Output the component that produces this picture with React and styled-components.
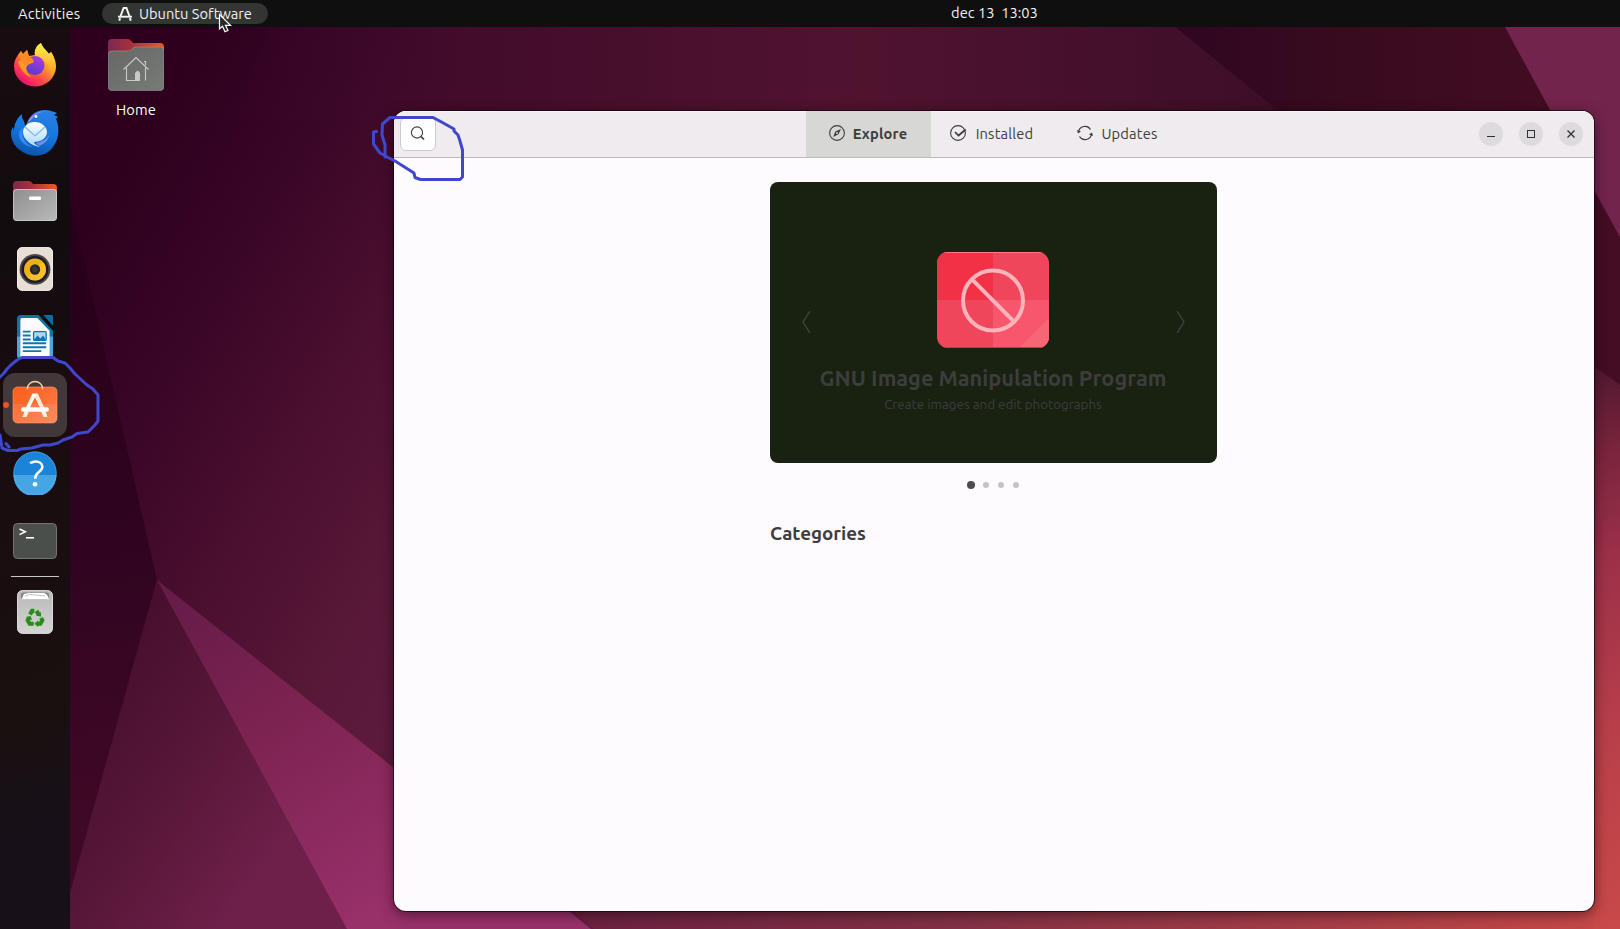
import React from "react";
import styled, { createGlobalStyle } from "styled-components";

const GlobalStyle = createGlobalStyle`
  * { box-sizing: border-box; }
  html, body, #root { height: 100%; }
  body {
    margin: 0;
    overflow: hidden;
    font-family: Ubuntu, "Noto Sans", "Open Sans", sans-serif;
    font-size: 14.67px;
  }
  button { font: inherit; color: inherit; border: 0; padding: 0; background: none; }
  svg { display: block; flex: none; }
`;

const Screen = styled.div`
  position: relative;
  width: 1620px;
  height: 929px;
  overflow: hidden;
  display: flex;
  flex-direction: column;
  background: #2e001f;
`;

const Backdrop = styled.svg`
  position: absolute;
  inset: 0;
`;

const TopBar = styled.header`
  position: relative;
  height: 27px;
  flex: none;
  display: grid;
  grid-template-columns: 1fr auto 1fr;
  align-items: center;
  background: #0f0f0f;
  color: #f2f2f2;
`;

const TopLeft = styled.div`
  display: flex;
  align-items: center;
  gap: 22px;
  padding-left: 18px;
`;

const TopLabel = styled.span`
  font-size: 14.67px;
  line-height: 20px;
  white-space: pre;
  letter-spacing: ${(p) => p.$spacing || 0}px;
`;

const Activities = styled(TopLabel)`
  width: 62px;
`;

const AppPill = styled.div`
  display: flex;
  align-items: center;
  gap: 7px;
  width: 166px;
  height: 21px;
  padding-left: 16px;
  border-radius: 11px;
  background: #333533;
`;

const Clock = styled(TopLabel)`
  margin-left: 369px;
  margin-bottom: 2px;
`;

const Desktop = styled.div`
  position: relative;
  flex: 1;
  display: flex;
`;

const Dock = styled.nav`
  width: 70px;
  padding: 6px 3px;
  display: flex;
  flex-direction: column;
  gap: 4px;
  background: linear-gradient(165deg, #190c10 0%, #120c0f 22%, #1a0c10 45%, #19100f 75%, #171018 88%, #171019 100%);
`;

const DockItem = styled.div`
  position: relative;
  height: 64px;
  flex: none;
  display: flex;
  align-items: center;
  justify-content: center;
  padding-bottom: ${(p) => p.$lift || 0}px;
  border-radius: 12px;
  background: ${(p) => (p.$active ? "#42383a" : "transparent")};
`;

const RunningDot = styled.i`
  position: absolute;
  left: 0;
  top: 29px;
  width: 6px;
  height: 6px;
  border-radius: 50%;
  background: #e95420;
`;

const DockSeparator = styled.hr`
  width: 48px;
  height: 1px;
  margin: -1px auto -1px;
  border: 0;
  flex: none;
  background: #c9c5c7;
`;

const DesktopIcon = styled.div`
  width: 132px;
  height: 100px;
  padding-top: 12px;
  display: flex;
  flex-direction: column;
  align-items: center;
  gap: 9px;
  color: #fff;
  text-shadow: 0 1px 2px rgba(0, 0, 0, 0.7);
  letter-spacing: 0.1px;
  line-height: 20px;
`;

const AppWindow = styled.main`
  width: 1200px;
  height: 800px;
  margin: 84px 0 0 192px;
  display: flex;
  flex-direction: column;
  border-radius: 12px;
  overflow: hidden;
  background: #fefbff;
  color: #3d3d3d;
  box-shadow: 0 0 0 1px rgba(20, 0, 12, 0.65), 0 3px 14px rgba(15, 0, 8, 0.55);
`;

const HeaderBar = styled.div`
  height: 47px;
  flex: none;
  display: grid;
  grid-template-columns: 1fr auto 1fr;
  background: #efebee;
  border-bottom: 1px solid #bdb9bc;
  box-shadow: inset 0 1px #fbf8fa;
`;

const SearchButton = styled.button`
  width: 36px;
  height: 34px;
  margin: 6px;
  display: grid;
  place-items: center;
  border: 1px solid #cdc9cc;
  border-radius: 6px;
  background: #fff;
`;

const Tabs = styled.div`
  display: flex;
  margin-right: 1px;
`;

const Tab = styled.button`
  width: 125px;
  height: 46px;
  display: flex;
  align-items: center;
  justify-content: center;
  gap: ${(p) => p.$gap || 8}px;
  padding-right: ${(p) => p.$shift || 0}px;
  padding-bottom: 2px;
  background: ${(p) => (p.$selected ? "#d7d7d6" : "transparent")};
  font-weight: ${(p) => (p.$selected ? 700 : 400)};
  letter-spacing: 0.18px;
  color: #3d3d3d;
`;

const WindowControls = styled.div`
  display: flex;
  align-items: center;
  justify-content: flex-end;
  gap: 16px;
  padding-right: 11px;
`;

const ControlButton = styled.button`
  width: 24px;
  height: 24px;
  border-radius: 50%;
  display: grid;
  place-items: center;
  background: #dddbdd;
`;

const Page = styled.section`
  width: 447px;
  margin: 24px auto 0 376px;
  display: flex;
  flex-direction: column;
`;

const Hero = styled.div`
  height: 281px;
  display: flex;
  align-items: center;
  justify-content: space-between;
  padding: 0 32px 2px;
  border-radius: 8px;
  background: #192111;
`;

const HeroContent = styled.div`
  align-self: flex-start;
  flex: 1;
  padding: 70px 1px 0 0;
  display: flex;
  flex-direction: column;
  align-items: center;
  white-space: nowrap;
`;

const HeroTitle = styled.h1`
  margin: 14px 0 0;
  font-size: 21.7px;
  line-height: 32px;
`;

const HeroSubtitle = styled.p`
  margin: 1px 0 0;
  font-size: 13.35px;
  line-height: 20px;
`;

const Pager = styled.div`
  display: flex;
  align-items: center;
  justify-content: center;
  height: 8px;
  margin-top: 18px;
  padding-right: 1px;
  gap: 9px;
`;

const PageDot = styled.i`
  width: ${(p) => (p.$current ? 8 : 6)}px;
  height: ${(p) => (p.$current ? 8 : 6)}px;
  margin-right: ${(p) => (p.$current ? -1 : 0)}px;
  border-radius: 50%;
  background: ${(p) => (p.$current ? "#4d4b4d" : "#c5c2c5")};
`;

const SectionTitle = styled.h2`
  margin: 31px 0 0;
  font-size: 18.8px;
  line-height: 26px;
`;

const Overlay = styled.svg`
  position: absolute;
  inset: 0;
  pointer-events: none;
`;

function Wallpaper() {
  return (
    <Backdrop width="1620" height="929" viewBox="0 0 1620 929">
      <defs>
        <linearGradient id="base" gradientUnits="userSpaceOnUse" x1="100" y1="200" x2="640" y2="520">
          <stop offset="0" stopColor="#2f001e" />
          <stop offset=".2" stopColor="#370526" />
          <stop offset=".45" stopColor="#4a0e2e" />
          <stop offset=".7" stopColor="#591838" />
          <stop offset="1" stopColor="#621c42" />
        </linearGradient>
        <linearGradient id="topBand" gradientUnits="userSpaceOnUse" x1="200" y1="0" x2="1280" y2="0">
          <stop offset="0" stopColor="#36042a" stopOpacity="0" />
          <stop offset=".25" stopColor="#420c2a" />
          <stop offset=".6" stopColor="#50132f" />
          <stop offset="1" stopColor="#3d0e28" />
        </linearGradient>
        <linearGradient id="topDark" x1="0" x2="1" y1="0" y2="0">
          <stop offset="0" stopColor="#2f0620" />
          <stop offset=".4" stopColor="#390b1f" />
          <stop offset="1" stopColor="#450d24" />
        </linearGradient>
        <linearGradient id="shade" gradientUnits="userSpaceOnUse" x1="70" y1="300" x2="150" y2="800">
          <stop offset="0" stopColor="#29001a" />
          <stop offset=".5" stopColor="#300420" />
          <stop offset="1" stopColor="#3f0825" />
        </linearGradient>
        <linearGradient id="lower" gradientUnits="userSpaceOnUse" x1="100" y1="680" x2="300" y2="820">
          <stop offset="0" stopColor="#480f2d" />
          <stop offset=".5" stopColor="#581738" />
          <stop offset="1" stopColor="#6e204a" />
        </linearGradient>
        <linearGradient id="pink" gradientUnits="userSpaceOnUse" x1="160" y1="590" x2="370" y2="910">
          <stop offset="0" stopColor="#651b48" />
          <stop offset=".45" stopColor="#7c2351" />
          <stop offset="1" stopColor="#98306a" />
        </linearGradient>
        <linearGradient id="right" x1="0" x2="0" y1="0" y2="1">
          <stop offset="0" stopColor="#4b172d" />
          <stop offset=".16" stopColor="#79243d" />
          <stop offset=".35" stopColor="#9c3049" />
          <stop offset=".65" stopColor="#b83f4a" />
          <stop offset="1" stopColor="#c94949" />
        </linearGradient>
        <linearGradient id="bottom" x1="0" x2="1" y1="0" y2="0">
          <stop offset="0" stopColor="#6b2140" />
          <stop offset=".35" stopColor="#803045" />
          <stop offset=".7" stopColor="#a33c47" />
          <stop offset="1" stopColor="#c64848" />
        </linearGradient>
      </defs>
      <rect width="1620" height="929" fill="url(#base)" />
      <path d="M270 27H1175L1290 120H230Z" fill="url(#topBand)" />
      <path d="M1175 27H1620V400H1594L1277 110Z" fill="url(#topDark)" />
      <path d="M1505 27H1620V237L1594 190L1550 110Z" fill="#73244c" />
      <path d="M70 200L157 580L60 929H0V200Z" fill="url(#shade)" />
      <path d="M157 580L347 929H60Z" fill="url(#lower)" />
      <path d="M157 580L394 768L591 929H347Z" fill="url(#pink)" />
      <path d="M1580 356L1620 385V929H1580Z" fill="url(#right)" />
      <path d="M565 905H1594V929H594Z" fill="url(#bottom)" />
    </Backdrop>
  );
}

const Firefox = () => (
  <svg width="44" height="44" viewBox="0 0 44 44">
    <defs>
      <linearGradient id="ff1" x1=".85" y1=".1" x2=".2" y2="1">
        <stop offset="0" stopColor="#fff44f" />
        <stop offset=".35" stopColor="#ffa02c" />
        <stop offset=".65" stopColor="#ff4f45" />
        <stop offset="1" stopColor="#e6007a" />
      </linearGradient>
      <linearGradient id="ff2" x1=".8" y1="0" x2=".3" y2="1">
        <stop offset="0" stopColor="#b238e8" />
        <stop offset="1" stopColor="#4f3fc8" />
      </linearGradient>
      <linearGradient id="ff3" x1="0" y1="0" x2="0" y2="1">
        <stop offset="0" stopColor="#fff14a" />
        <stop offset="1" stopColor="#ff9a22" />
      </linearGradient>
    </defs>
    <path d="M5 12L8 8L10 11L14 7L16 13L22 12C21 7 24 2 28 0C29 4 33 7 36 11L38 9C42 15 43 20 43 24A21 20 0 0 1 1 23C1 18 3 15 5 12Z" fill="url(#ff1)" />
    <path d="M28 0C29 4 33 7 36 11L38 9C43 17 44 27 38 33C39 26 35 19 28 15L22 12C21 7 24 2 28 0Z" fill="url(#ff3)" />
    <circle cx="22" cy="22.500" r="9.500" fill="url(#ff2)" />
    <path d="M5 19C8 16 14 16 21 18C20 21 16 20 14 23C12 26 14 31 19 34C13 34 8 27 5 19Z" fill="#ff9a22" />
    <path d="M5 12L8 8L10 11L14 7L16 14C20 15 21 17 20 19C17 20 15 20 13 23Z" fill="#ff8a20" />
  </svg>
);

const Thunderbird = () => (
  <svg width="48" height="46" viewBox="0 0 48 46">
    <defs>
      <linearGradient id="tb1" x1=".7" y1="0" x2=".4" y2="1">
        <stop offset="0" stopColor="#2b7fe4" />
        <stop offset=".5" stopColor="#1377df" />
        <stop offset="1" stopColor="#0b54ac" />
      </linearGradient>
      <linearGradient id="tb2" x1="0" y1="0" x2="0" y2="1">
        <stop offset="0" stopColor="#fff" />
        <stop offset="1" stopColor="#a9d7fb" />
      </linearGradient>
    </defs>
    <path d="M16 13C20 3 27 0 34 0C39 0 43 2 46 3L43 5L47 7L45 9C49 18 48 29 42 37C36 45 27 47 19 45C8 42 0 34 0 23C0 21 1 18 2 17L3 21C3 14 6 8 11 4C10 9 14 10 14 16Z" fill="url(#tb1)" />
    <path d="M16 13C20 4 27 1 37 1C29 1.500 25 4 22 8C20 10 18 12 16 13Z" fill="#9c85ef" />
    <circle cx="25" cy="6.500" r="1.400" fill="#fff" />
    <path d="M12 18C10 27 14 34 22 37C15 37 8 31 8 25C8 22 9 20 12 18Z" fill="#338df0" />
    <path d="M28 36C34 34 38 29 38 24C37 28 34 31 25 33Z" fill="#718dec" />
    <path d="M23.500 12C31 12 36 17 36 22C36 28 30 32 23 32C23 34 26 35 29 37C20 36 12 29 12 22C12 17 17 12 23.500 12Z" fill="url(#tb2)" />
    <path d="M14 17L23 25Q24 26 25 25L34 17" fill="none" stroke="#83bcf0" strokeWidth="1.400" />
  </svg>
);

const FolderBack = ({ id, d }) => (
  <>
    <defs>
      <linearGradient id={id} x1="0" x2="1">
        <stop offset="0" stopColor="#7c2850" />
        <stop offset=".4" stopColor="#a5313d" />
        <stop offset="1" stopColor="#f05a22" />
      </linearGradient>
    </defs>
    <path d={d} fill={`url(#${id})`} />
  </>
);

const Files = () => (
  <svg width="44" height="40" viewBox="0 0 44 40">
    <defs>
      <linearGradient id="fi" x1="0" y1="0" x2="1" y2="1">
        <stop offset="0" stopColor="#8f8f8f" />
        <stop offset="1" stopColor="#b9b9b9" />
      </linearGradient>
    </defs>
    <FolderBack id="fib" d="M0 4Q0 0 4 0H16Q18 0 20 3H40Q44 3 44 7V20H0Z" />
    <rect y="8" width="44" height="32" rx="4" fill="#d0d0d0" />
    <rect x=".7" y="8.700" width="42.600" height="30.600" rx="3.500" fill="url(#fi)" />
    <rect x="16" y="15.500" width="12" height="3.500" rx="1.200" fill="#fff" />
  </svg>
);

const Rhythmbox = () => (
  <svg width="36" height="44" viewBox="0 0 37 45">
    <rect x=".5" y=".5" width="36" height="44" rx="4.500" fill="#e8ded3" stroke="#f7f3ee" />
    <circle cx="18.500" cy="23" r="15.800" fill="#474847" />
    <circle cx="18.500" cy="23" r="13.800" fill="#1b1b2c" />
    <circle cx="18.500" cy="23" r="11.300" fill="#edb20f" />
    <path d="M10.500 31A11.300 11.300 0 0 0 26.500 15Z" fill="#ffc83b" opacity=".6" />
    <circle cx="18.500" cy="23" r="5.300" fill="#262827" />
    <circle cx="18.500" cy="23" r="2.800" fill="#383a39" />
  </svg>
);

const Writer = () => (
  <svg width="36" height="44" viewBox="0 0 37 45">
    <path d="M4 0H22L37 16V42Q37 45 33 45H4Q0 45 0 41V4Q0 0 4 0Z" fill="#0b75a8" />
    <path d="M0 22H37V42Q37 45 33 45H4Q0 45 0 41Z" fill="#4ba6d0" />
    <path d="M5 3H21L33.500 16V43H3.500V5Q3.500 3 5 3Z" fill="#fcfcfc" />
    <path d="M27 0H36Q37 0 37 1V11Z" fill="#0a6e9e" />
    <path d="M6 17H14M6 21H14M6 25H14M6 29H30M6 33H30M6 37H25" stroke="#0d76b2" strokeWidth="2" />
    <rect x="17" y="17" width="13" height="9" rx="1" fill="#a8d9f2" stroke="#0d76b2" strokeWidth="1.300" />
    <path d="M17 26L21 21L24 24L27 21L30 26Z" fill="#0d76b2" />
  </svg>
);

const StoreMark = ({ color }) => (
  <svg width="14" height="14" viewBox="0 0 14 14" fill="none" stroke={color}>
    <path d="M2.600 9L5.600 1H8.400L11.400 9M2 11L1.300 13.800M12 11L12.700 13.800" strokeWidth="2" />
    <path d="M0 9.700H14" strokeWidth="1.900" />
  </svg>
);

const Software = () => (
  <svg width="46" height="46" viewBox="0 0 46 46">
    <defs>
      <linearGradient id="sw" x1="0" y1="0" x2="1" y2="1">
        <stop offset="0" stopColor="#ff5b16" />
        <stop offset="1" stopColor="#f98254" />
      </linearGradient>
    </defs>
    <rect x="1" y="7" width="44" height="36" rx="4.500" fill="url(#sw)" stroke="#ff9b70" strokeWidth=".6" />
    <path d="M1 24H45V39Q45 43 41 43H5Q1 43 1 39Z" fill="#fff" opacity=".07" />
    <path d="M15.500 9.500V8.500C15.500 4.500 19 1.500 23 1.500S30.500 4.500 30.500 8.500V9.500" fill="none" stroke="#f4d3a0" strokeWidth="1.400" />
    <path d="M20.500 13.500H25.500L32.500 28.500H28.500L23 17L17.500 28.500H13.500Z" fill="#fff" />
    <path d="M23 17L25.500 13.500L32.500 28.500H28.500Z" fill="#ffe6d8" />
    <path d="M12.500 31.500H17L14.500 37H10.500ZM29 31.500H33.500L35.500 37H31.500Z" fill="#ffeee6" />
    <rect x="9" y="27.300" width="28" height="4.500" rx="2.200" fill="#fff" />
  </svg>
);

const Help = () => (
  <svg width="44" height="44" viewBox="0 0 45 45">
    <circle cx="22.500" cy="22.500" r="22" fill="#1c84d8" />
    <path d="M.5 24.500H44.500A22 22 0 0 1 .5 24.500Z" fill="#46a5e5" />
    <circle cx="22.500" cy="22.500" r="21.700" fill="none" stroke="#5cb2ea" strokeWidth=".6" />
    <path d="M17.500 12.500Q20 10.700 23 10.700C27 10.700 30 12.800 30 16.200C30 21.500 22.800 21.500 22.800 27.300V28.500" fill="none" stroke="#fff" strokeWidth="2.600" />
    <circle cx="22.500" cy="34" r="2.400" fill="#fff" />
  </svg>
);

const Terminal = () => (
  <svg width="44" height="36" viewBox="0 0 44 36">
    <rect x=".5" y=".5" width="43" height="35" rx="4" fill="#4b4f4b" stroke="#727672" />
    <path d="M6.500 6L12.300 8.800L6.500 11.600" fill="none" stroke="#fff" strokeWidth="1.600" />
    <path d="M13 14.800H21" stroke="#fff" strokeWidth="1.600" />
  </svg>
);

const Trash = () => (
  <svg width="36" height="44" viewBox="0 0 37 45">
    <defs>
      <linearGradient id="tr" x1="0" x2="0" y1="0" y2="1">
        <stop offset="0" stopColor="#b9b9b9" />
        <stop offset="1" stopColor="#d4d4d4" />
      </linearGradient>
    </defs>
    <rect x=".5" y=".5" width="36" height="44" rx="5" fill="url(#tr)" stroke="#dedede" />
    <rect x="4" y="2.500" width="29" height="7" rx="2.500" fill="#858585" />
    <path d="M5 9.500L7 4L12 3H28L31 5L33 9.500Z" fill="#fff" />
    <path d="M8 6L13 4.500L29 6" fill="none" stroke="#b0b0b0" strokeWidth=".8" />
    <g fill="none" stroke="#278d19" strokeWidth="4.200">
      <path d="M13.300 25L15.500 21.300H17.800M20 21.300L22.800 25.800" />
      <path d="M24.800 28.500L26 31.200L24 34.500H20.500" />
      <path d="M17.200 34.500H13L11 31L12.700 28" />
    </g>
    <path d="M24.500 22.500L24.800 27.500L19.500 26ZM21.800 31V38L17.800 34.500ZM9 28L14 26.500L15.600 31Z" fill="#278d19" />
  </svg>
);

const HomeFolder = () => (
  <svg width="56" height="52" viewBox="0 0 56 52">
    <defs>
      <linearGradient id="hf" x1="0" y1="0" x2="1" y2="1">
        <stop offset="0" stopColor="#666766" />
        <stop offset="1" stopColor="#787b76" />
      </linearGradient>
    </defs>
    <FolderBack id="hfb" d="M0 4Q0 0 4 0H20Q22 0 25 4H52Q56 4 56 8V24H0Z" />
    <path d="M0 16Q0 12 4 12H20Q23 12 24.500 9.500Q26 8 28 8H52Q56 8 56 12V47Q56 51.500 52 51.500H4Q0 51.500 0 47Z" fill="url(#hf)" stroke="#969895" strokeWidth=".6" />
    <path d="M15.500 30.500L28 18.500L40.500 30.500M18.500 28.500V41.500H27.500M37.500 28.500V41.500M36 22.500H37.500V26" fill="none" stroke="#c9c9c9" strokeWidth="1.100" />
    <path d="M27 42V34L29 32H30.500L32 34V42Z" fill="#c9c9c9" />
  </svg>
);

const ExploreIcon = () => (
  <svg width="16" height="16" viewBox="0 0 16 16">
    <circle cx="8" cy="8" r="7.400" fill="none" stroke="#3d3d3d" strokeWidth="1.100" />
    <path d="M12 4L9.500 9.300L4.200 12L6.300 6.500Z" fill="#3d3d3d" />
    <circle cx="8" cy="8" r="1" fill="#d7d7d6" />
  </svg>
);

const InstalledIcon = () => (
  <svg width="17" height="16" viewBox="0 0 17 16" fill="none" stroke="#3d3d3d">
    <circle cx="8" cy="8" r="7.400" strokeWidth="1.100" />
    <path d="M5 7L8.500 10.500L15.700 4.500" strokeWidth="1.700" />
  </svg>
);

const UpdatesIcon = () => (
  <svg width="16" height="16" viewBox="0 0 16 16" fill="none" stroke="#3d3d3d" strokeWidth="1.200">
    <path d="M1.500 7A6.500 6.500 0 0 1 13.500 4.500M14.500 9A6.500 6.500 0 0 1 2.500 11.500" />
    <path d="M0 5L1 8.500L4 6.500ZM16 11L15 7.500L12 9.500Z" fill="#3d3d3d" stroke="none" />
  </svg>
);

const BlockedImage = () => (
  <svg width="112" height="96" viewBox="0 0 112 96">
    <defs>
      <clipPath id="tile"><rect width="112" height="96" rx="11" /></clipPath>
    </defs>
    <g clipPath="url(#tile)">
      <rect width="112" height="96" fill="#ef465b" />
      <rect width="56" height="48" fill="#f13145" />
      <rect x="56" y="48" width="56" height="48" fill="#f8566c" />
      <path d="M82 96L112 66V96Z" fill="#f76773" />
      <path d="M0 .5H112" stroke="#ff7a82" />
      <path d="M0 95.500H112" stroke="#c93449" />
    </g>
    <g fill="none" stroke="#ffb3bb" strokeWidth="4">
      <circle cx="56" cy="48.500" r="30" />
      <path d="M35 27.300L77 69.700" />
    </g>
  </svg>
);

const Chevron = ({ flip }) => (
  <svg width="9" height="24" viewBox="0 0 9 24">
    <path d={flip ? "M1 1L8 12L1 23" : "M8 1L1 12L8 23"} fill="none" stroke="#484548" strokeWidth="1.200" />
  </svg>
);

const dockApps = [
  { name: "firefox", Icon: Firefox },
  { name: "thunderbird", Icon: Thunderbird },
  { name: "files", Icon: Files },
  { name: "rhythmbox", Icon: Rhythmbox },
  { name: "writer", Icon: Writer },
  { name: "software", Icon: Software, active: true, lift: 4 },
  { name: "help", Icon: Help },
  { name: "terminal", Icon: Terminal },
];

export default function App() {
  return (
    <>
      <GlobalStyle />
      <Screen>
        <Wallpaper />
        <TopBar>
          <TopLeft>
            <Activities $spacing={0.22}>Activities</Activities>
            <AppPill>
              <StoreMark color="#f4f4f4" />
              <TopLabel>Ubuntu Software</TopLabel>
            </AppPill>
          </TopLeft>
          <Clock>dec 13  13:03</Clock>
        </TopBar>
        <Desktop>
          <Dock>
            {dockApps.map(({ name, Icon, active, lift }) => (
              <DockItem key={name} $active={active} $lift={lift}>
                {active && <RunningDot />}
                <Icon />
              </DockItem>
            ))}
            <DockSeparator />
            <DockItem><Trash /></DockItem>
          </Dock>
          <DesktopIcon>
            <HomeFolder />
            <span>Home</span>
          </DesktopIcon>
          <AppWindow>
            <HeaderBar>
              <SearchButton>
                <svg width="16" height="16" viewBox="0 0 16 16" fill="none" stroke="#3d3d3d" strokeWidth="1.100">
                  <circle cx="7" cy="6.500" r="5.600" />
                  <path d="M11 10.500L14 13.500" strokeWidth="1.700" />
                </svg>
              </SearchButton>
              <Tabs>
                <Tab $selected $shift={1}><ExploreIcon />Explore</Tab>
                <Tab $gap={9} $shift={4}><InstalledIcon />Installed</Tab>
                <Tab $shift={2}><UpdatesIcon />Updates</Tab>
              </Tabs>
              <WindowControls>
                <ControlButton>
                  <svg width="10" height="10" viewBox="0 0 10 10"><path d="M1 7.500H9" stroke="#303030" /></svg>
                </ControlButton>
                <ControlButton>
                  <svg width="8" height="8" viewBox="0 0 8 8"><rect x=".5" y=".5" width="7" height="7" fill="none" stroke="#303030" /></svg>
                </ControlButton>
                <ControlButton>
                  <svg width="8" height="8" viewBox="0 0 8 8"><path d="M.5 .5L7.500 7.500M7.500 .5L.5 7.500" stroke="#303030" strokeWidth="1.300" /></svg>
                </ControlButton>
              </WindowControls>
            </HeaderBar>
            <Page>
              <Hero>
                <Chevron />
                <HeroContent>
                  <BlockedImage />
                  <HeroTitle>GNU Image Manipulation Program</HeroTitle>
                  <HeroSubtitle>Create images and edit photographs</HeroSubtitle>
                </HeroContent>
                <Chevron flip />
              </Hero>
              <Pager>
                <PageDot $current />
                <PageDot />
                <PageDot />
                <PageDot />
              </Pager>
              <SectionTitle>Categories</SectionTitle>
            </Page>
          </AppWindow>
        </Desktop>
        <Overlay width="1620" height="929" viewBox="0 0 1620 929">
          <g fill="none" stroke="#3f48cc" strokeWidth="3" strokeLinejoin="round" strokeLinecap="round">
            <path d="M-1 378L4 373L7 369L11 365L17 360L22 357.500H53L58 361L65 363L70 368L75 374L87 385L93 389L98 395V421L95 425L88 432L77 433.500L72 437L63 440L58 443L50 445H43L32 448L21 449L17 450.500H8L2 448L0 435M6 443.500L9 447" />
            <path d="M376.500 131.500L373.500 132V144L380 153L388 157.500L395 161L414 173L415 177.500L420.500 179.500H460L462.500 177V150L460 141L458 135L454 131V129L441.500 122L433 117.500H390L382.500 124L382 135L385 145V157" />
          </g>
          <path d="M219.500 14.500V29L222.500 26.300L225 31.800L228 30.500L225.500 25.300H230.500Z" fill="#282828" stroke="#fff" strokeWidth="1.200" />
        </Overlay>
      </Screen>
    </>
  );
}
